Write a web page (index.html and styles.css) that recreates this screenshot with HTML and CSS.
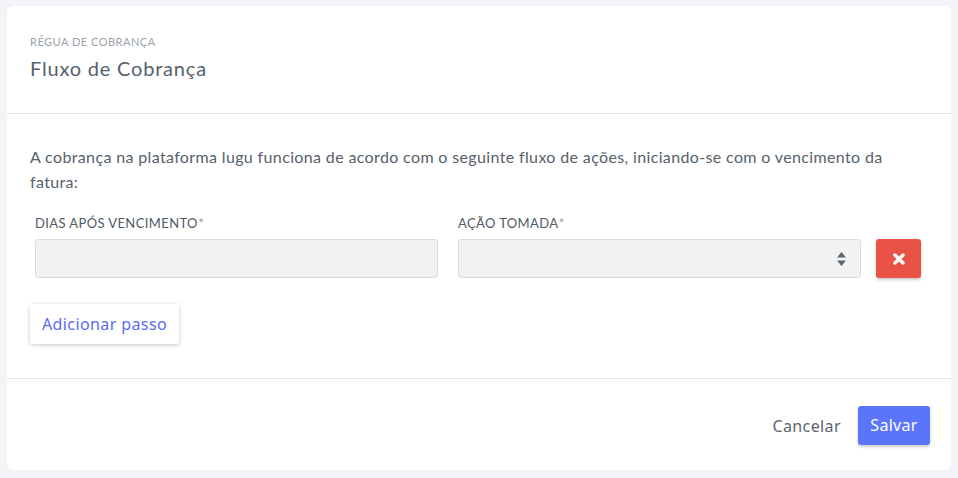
FILE: index.html
```html
<!DOCTYPE html>
<html lang="pt">
<head>
	<meta charset="UTF-8">
	<title>Fluxo de Cobrança</title>
	<link rel="stylesheet" href="styles.css">
</head>
<body>
	<div class="card">
		<div class="card-head">
			<div class="kicker">RÉGUA DE COBRANÇA</div>
			<h1 class="title">Fluxo de Cobrança</h1>
		</div>
		<div class="card-body">
			<p class="intro">A cobrança na plataforma lugu funciona de acordo com o seguinte fluxo de ações, iniciando-se com o vencimento da fatura:</p>
			<div class="step">
				<div class="field">
					<label>DIAS APÓS VENCIMENTO<span class="req">*</span></label>
					<div class="input"></div>
				</div>
				<div class="field">
					<label>AÇÃO TOMADA<span class="req">*</span></label>
					<div class="input select">
						<svg width="9" height="14" viewBox="0 0 9 14"><path d="M4.5 0 L9 5.5 H0 Z M4.5 14 L0 8.5 H9 Z" fill="#5b6670"/></svg>
					</div>
				</div>
				<a href="javascript:;" class="btn-del">
					<svg width="12" height="12" viewBox="0 0 12 12"><path d="M2 2 L10 10 M10 2 L2 10" stroke="#fff" stroke-width="3.4" stroke-linecap="round"/></svg>
				</a>
			</div>
			<a href="javascript:;" class="btn-add">Adicionar passo</a>
		</div>
		<div class="card-foot">
			<a href="javascript:;" class="btn-cancel">Cancelar</a>
			<a href="javascript:;" class="btn-save">Salvar</a>
		</div>
	</div>
</body>
</html>
```

FILE: styles.css
```css
*{padding:0; margin:0; box-sizing:border-box;}
body{background:#f3f4f7; font-family:Lato, "Noto Sans", sans-serif; color:#525e69;}
a{text-decoration:none;}
.card{width:944px; height:464px; margin:6px 7px; background:#fff; border-radius:6px; display:flex; flex-direction:column;}
.card-head{height:108px; padding:29px 23px 0; border-bottom:1px solid #e3e5e8;}
.kicker{font-size:11px; color:#9aa3ab; line-height:14px; letter-spacing:.5px;}
.title{font-size:20px; font-weight:normal; color:#55616c; line-height:26px; margin-top:6px; letter-spacing:.8px;}
.card-body{height:265px; padding:30px 30px 0 23px; border-bottom:1px solid #e3e5e8;}
.intro{font-size:16px; line-height:25px; color:#56616c; letter-spacing:.36px;}
.step{display:flex; align-items:flex-end; padding-left:5px; margin-top:21px;}
.field{width:403px; margin-right:20px;}
.field + .field{margin-right:15px;}
.field label{display:block; font-size:13px; line-height:16px; color:#4f5a64; margin-bottom:8px; letter-spacing:.4px;}
.req{color:#9aa3ab; font-size:14px;}
.input{height:39px; background:#f2f2f2; border:1px solid #d9dadc; border-radius:3px; display:flex; align-items:center; justify-content:flex-end; padding-right:14px;}
.btn-del{width:45px; height:39px; background:#ea5247; border-radius:3px; box-shadow:0 2px 3px rgba(0,0,0,.2); display:flex; align-items:center; justify-content:center;}
.btn-add{display:inline-block; margin-top:26px; width:149px; height:40px; line-height:40px; text-align:center; font-family:"Noto Sans", sans-serif; font-size:16px; letter-spacing:.4px; color:#5a6cf4; background:#fff; border-radius:3px; box-shadow:0 1px 4px rgba(0,0,0,.22);}
.card-foot{flex:1; display:flex; justify-content:flex-end; align-items:center; padding-right:21px; padding-top:2px;}
.btn-cancel{font-family:"Noto Sans", sans-serif; font-size:16px; letter-spacing:.4px; color:#5b6670; margin-right:17px;}
.btn-save{width:72px; height:39px; line-height:39px; text-align:center; font-family:"Noto Sans", sans-serif; font-size:16px; letter-spacing:.3px; color:#fff; background:#5a75fc; border-radius:3px; box-shadow:0 2px 3px rgba(0,0,0,.2);}
```
